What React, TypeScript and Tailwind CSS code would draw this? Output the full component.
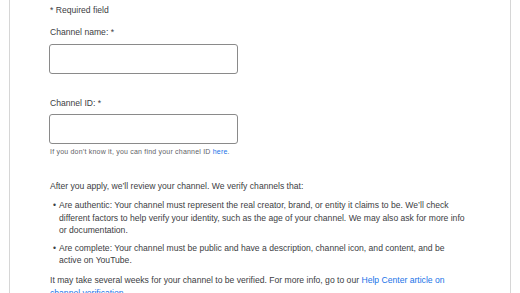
import React from 'react';

const font = { fontFamily: '"Liberation Sans", Arial, sans-serif' };

export default function App() {
  return (
    <div className="h-[293px] overflow-hidden bg-white" style={font}>
      <div className="ml-[9px] w-[502px] min-h-[293px] border-x border-[#d6d6d6] pl-[40px] pr-[42px] pt-[4px] text-[8.6px] leading-[12.5px] text-[#3c4043]">
        <p>* Required field</p>

        <label className="mt-[9.5px] block">Channel name: *</label>
        <input className="mt-[5px] -ml-px block h-[30px] w-[189px] rounded-[3px] border border-[#8a8a8a] bg-white outline-none" />

        <label className="mt-[23px] block">Channel ID: *</label>
        <input className="mt-[5px] -ml-px block h-[30px] w-[189px] rounded-[3px] border border-[#8a8a8a] bg-white outline-none" />
        <p className="mt-[3px] text-[7px] leading-[10px] tracking-[0.2px] text-[#5f6368]">
          If you don’t know it, you can find your channel ID <a className="text-[#1a73e8]">here</a>.
        </p>

        <p className="mt-[23px]">After you apply, we’ll review your channel. We verify channels that:</p>
        <ul className="mt-[6.5px] flex flex-col gap-[5px]">
          <li className="flex">
            <span className="w-[9px] shrink-0 pl-[3px]">•</span>
            <span>Are authentic: Your channel must represent the real creator, brand, or entity it claims to be. We’ll check different factors to help verify your identity, such as the age of your channel. We may also ask for more info or documentation.</span>
          </li>
          <li className="flex">
            <span className="w-[9px] shrink-0 pl-[3px]">•</span>
            <span>Are complete: Your channel must be public and have a description, channel icon, and content, and be active on YouTube.</span>
          </li>
        </ul>
        <p className="mt-[7.5px]">
          It may take several weeks for your channel to be verified. For more info, go to our{' '}
          <a className="text-[#1a73e8]">Help Center article on channel verification</a>.
        </p>
      </div>
    </div>
  );
}
